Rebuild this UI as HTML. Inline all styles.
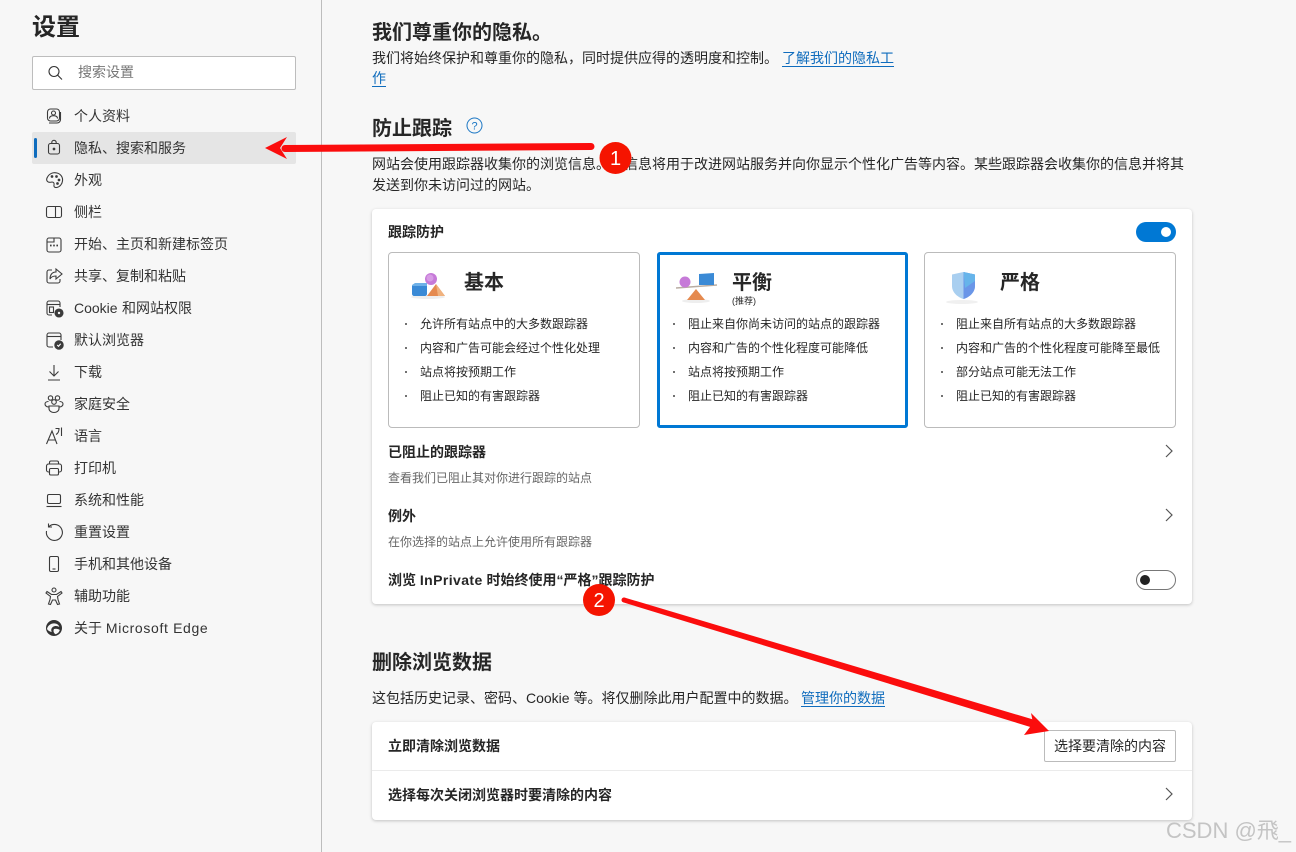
<!DOCTYPE html>
<html lang="zh-CN"><head><meta charset="utf-8"><title>设置</title>
<style>
*{box-sizing:border-box}
html,body{margin:0;padding:0}
body{width:1296px;height:852px;overflow:hidden;background:#f7f7f7;position:relative;font-family:"Liberation Sans","Noto Sans CJK SC",sans-serif;font-size:14px;color:#262626}
.t{position:absolute;white-space:nowrap;line-height:20px}
.b{font-weight:700}
.h{font-size:20px;font-weight:700;line-height:28px;color:#262626}
.s{font-size:12px;line-height:16px}
.g{color:#666}
.box{position:absolute}
.card{background:#fff;border-radius:4px;box-shadow:0 1px 3px rgba(0,0,0,.22)}
.opt{background:#fff;border:1px solid #bbb;border-radius:4px}
a{color:#0f6cbd;text-decoration:none;border-bottom:1px solid #0f6cbd}
.n{position:absolute;left:74px;white-space:nowrap;line-height:20px;color:#333}
svg.i{position:absolute;left:44px;width:20px;height:20px;fill:none;stroke:#3b3b3b;stroke-width:1.1}
svg.c{position:absolute;width:10px;height:16px;fill:none;stroke:#555;stroke-width:1.2}
.d{position:absolute;width:2px;height:2px;background:#444;border-radius:1px}
</style></head><body>

<div class="box" style="left:321px;top:0;width:1px;height:852px;background:#bdbdbd"></div>

<div class="t b" style="left:32px;top:11px;font-size:24px;line-height:34px">设置</div>
<div class="box" style="left:32px;top:56px;width:264px;height:34px;background:#fff;border:1px solid #bdbdbd;border-radius:2px"></div>
<svg class="i" style="left:47px;top:65px;width:17px;height:17px;stroke:#333" viewBox="0 0 17 17"><circle cx="7" cy="6.500" r="5"/><path d="M10.600 10.100 15 14.500"/></svg>
<div class="t g" style="left:78px;top:62px;color:#767676">搜索设置</div>

<div class="box" style="left:32px;top:132px;width:264px;height:32px;background:#e5e5e5;border-radius:2px"></div>
<div class="box" style="left:34px;top:138px;width:3px;height:20px;background:#0f6cbd;border-radius:2px"></div>

<svg class="i" style="top:106px" viewBox="0 0 20 20"><rect x="3.500" y="3" width="12" height="12" rx="3"/><path d="M5 17h8c2 0 3.500-1.500 3.500-3.500V6"/><circle cx="9.500" cy="7" r="2"/><path d="M5.500 12.500c0-2 1.500-2.800 4-2.800s4 .8 4 2.800"/></svg>
<div class="n" style="top:106px">个人资料</div>

<svg class="i" style="top:138px" viewBox="0 0 20 20"><rect x="4.500" y="5.500" width="11" height="10.500" rx="2"/><path d="M7.800 5.500V4.500a2.200 2.200 0 0 1 4.400 0v1"/><circle cx="10" cy="11" r=".8" fill="#3b3b3b"/></svg>
<div class="n" style="top:138px">隐私、搜索和服务</div>

<svg class="i" style="top:170px" viewBox="0 0 20 20"><path d="M3 8C5 3.500 9 2 13 3c4 1 6 4.500 5.500 8-.4 3-2.500 6-6 6.500-2 .2-3-1-2.500-2.500.5-1.800-.5-3-2-3-2 .5-3.500.5-4.500-.5C2.500 10.500 2.500 9.200 3 8Z"/><circle cx="8" cy="6.500" r=".8" fill="#3b3b3b"/><circle cx="12.500" cy="6.500" r=".8" fill="#3b3b3b"/><circle cx="15" cy="10" r=".8" fill="#3b3b3b"/><circle cx="13.500" cy="13.500" r=".8" fill="#3b3b3b"/></svg>
<div class="n" style="top:170px">外观</div>

<svg class="i" style="top:202px" viewBox="0 0 20 20"><rect x="2.500" y="4.500" width="15" height="11" rx="2"/><path d="M11.500 4.500v11"/></svg>
<div class="n" style="top:202px">侧栏</div>

<svg class="i" style="top:234px" viewBox="0 0 20 20"><path d="M5 4h10a2 2 0 0 1 2 2v10a2 2 0 0 1-2 2H5a2 2 0 0 1-2-2V6a2 2 0 0 1 2-2Z"/><path d="M3 8h7V4"/><path d="M6 11.500h1.600M9.200 11.500h1.600M12.400 11.500h1.600" stroke-width="1.800"/></svg>
<div class="n" style="top:234px">开始、主页和新建标签页</div>

<svg class="i" style="top:266px" viewBox="0 0 20 20"><path d="M8 4H5a2 2 0 0 0-2 2v9a2 2 0 0 0 2 2h9a2 2 0 0 0 2-2v-2"/><path d="M12 3l6 5-6 5v-3c-3 0-5 1-6 3 0-4 2-7 6-7Z"/></svg>
<div class="n" style="top:266px">共享、复制和粘贴</div>

<svg class="i" style="top:298px" viewBox="0 0 20 20"><path d="M8 17H5a2 2 0 0 1-2-2V5a2 2 0 0 1 2-2h9a2 2 0 0 1 2 2v4"/><path d="M3 6.500h13"/><rect x="5.500" y="9" width="4" height="5.500"/><circle cx="15" cy="15" r="4" fill="#3b3b3b"/><circle cx="15" cy="15" r="1.200" fill="#f7f7f7" stroke="none"/></svg>
<div class="n" style="top:298px">Cookie<span style="letter-spacing:.5px"> </span>和网站权限</div>

<svg class="i" style="top:330px" viewBox="0 0 20 20"><path d="M9 17H5a2 2 0 0 1-2-2V5a2 2 0 0 1 2-2h10a2 2 0 0 1 2 2v5"/><path d="M3 6.500h14"/><circle cx="15" cy="15" r="4.200" fill="#3b3b3b"/><path d="M13.200 15l1.300 1.300 2.200-2.500" stroke="#fff"/></svg>
<div class="n" style="top:330px">默认浏览器</div>

<svg class="i" style="top:362px" viewBox="0 0 20 20"><path d="M10 3v11M5.500 9.500 10 14l4.500-4.500M4 18h12"/></svg>
<div class="n" style="top:362px">下载</div>

<svg class="i" style="top:394px" viewBox="0 0 20 20"><circle cx="6.500" cy="4" r="2.200"/><circle cx="13.500" cy="4" r="2.200"/><circle cx="10" cy="8" r="2.300"/><path d="M4.500 7.500C2.500 7.500 1 8.500 1 10s1.500 3 3.500 3"/><path d="M15.500 7.500c2 0 3.500 1 3.500 2.500s-1.500 3-3.500 3"/><path d="M5 12h10v2.500c0 2.500-2.500 4-5 4s-5-1.500-5-4Z"/></svg>
<div class="n" style="top:394px">家庭安全</div>

<svg class="i" style="top:426px" viewBox="0 0 20 20"><path d="M2.500 18 8 5l5 13M4.500 14h7"/><path d="M11.500 2.500h3.500c0 3-1 5-3 6M17.500 1.500v8.500"/></svg>
<div class="n" style="top:426px">语言</div>

<svg class="i" style="top:458px" viewBox="0 0 20 20"><path d="M5.500 6V4.500a1.500 1.500 0 0 1 1.500-1.500h6a1.500 1.500 0 0 1 1.500 1.500V6"/><path d="M5.500 14H4.500A2 2 0 0 1 2.500 12V8a2 2 0 0 1 2-2h11a2 2 0 0 1 2 2v4a2 2 0 0 1-2 2h-1"/><rect x="5.500" y="10.500" width="9" height="6.500" rx="1.200"/></svg>
<div class="n" style="top:458px">打印机</div>

<svg class="i" style="top:490px" viewBox="0 0 20 20"><rect x="3.500" y="4.500" width="13" height="9" rx="1.500"/><path d="M2.500 16.500h15"/></svg>
<div class="n" style="top:490px">系统和性能</div>

<svg class="i" style="top:522px" viewBox="0 0 20 20"><path d="M5 4.500A8 8 0 1 1 2.500 9"/><path d="M4.500 1.500v3.500H8"/></svg>
<div class="n" style="top:522px">重置设置</div>

<svg class="i" style="top:554px" viewBox="0 0 20 20"><rect x="5.500" y="2.500" width="9" height="15" rx="1.500"/><path d="M8.500 15h3"/></svg>
<div class="n" style="top:554px">手机和其他设备</div>

<svg class="i" style="top:586px" viewBox="0 0 20 20"><circle cx="10" cy="4" r="2"/><path d="M3 5.500 7.500 8.500h5L17 5.500l1 1.500-4.500 3.500.5 3 1.500 4.500-2 .5L11.500 14h-3L6.500 18.500l-2-.5L6 13.500l.5-3L2 7Z"/></svg>
<div class="n" style="top:586px">辅助功能</div>

<svg class="i" style="top:618px;stroke:none" viewBox="0 0 20 20"><circle cx="10" cy="10" r="8" fill="#333"/><path d="M3 11c1-4 4.500-6 8-5.500 2.300.3 4 1.700 4.300 3.500-1.700-1.200-4.500-1.500-6.500 0-1.600 1.200-2 3.300-1 5-2-.3-3.900-1.400-4.800-3Z" fill="#f7f7f7"/><path d="M10 11c1.700-.6 4.500-.3 5.800 1-.6 2.200-2.300 3.800-4.300 4.200-1.700-1-2.600-3.200-1.500-5.200Z" fill="#f7f7f7"/></svg>
<div class="n" style="top:618px">关于 <span style="letter-spacing:.65px">Microsoft Edge</span></div>

<!-- main -->
<div class="t h" style="left:372px;top:19px">我们尊重你的隐私。</div>
<div class="t" style="left:372px;top:48px;line-height:20px">我们将始终保护和尊重你的隐私，同时提供应得的透明度和控制。</div>
<div class="t" style="left:782px;top:48px"><a>了解我们的隐私工</a></div>
<div class="t" style="left:372px;top:68px"><a>作</a></div>

<div class="t h" style="left:372px;top:115px">防止跟踪</div>
<svg style="position:absolute;left:466px;top:117px" width="17" height="17" viewBox="0 0 17 17"><circle cx="8.500" cy="8.500" r="7.500" fill="none" stroke="#1a76c4" stroke-width="1"/><text x="8.500" y="12.500" text-anchor="middle" font-size="11" fill="#1a76c4" font-family="Liberation Sans">?</text></svg>

<div class="t" style="left:372px;top:154px;width:820px">网站会使用跟踪器收集你的浏览信息。此信息将用于改进网站服务并向你显示个性化广告等内容。某些跟踪器会收集你的信息并将其</div>
<div class="t" style="left:372px;top:175px">发送到你未访问过的网站。</div>

<div class="box card" style="left:372px;top:209px;width:820px;height:395px"></div>
<div class="t b" style="left:388px;top:222px">跟踪防护</div>
<div class="box" style="left:1136px;top:222px;width:40px;height:20px;background:#0078d4;border-radius:10px"></div>
<div class="box" style="left:1161px;top:227px;width:10px;height:10px;background:#fff;border-radius:50%"></div>

<div class="box opt" style="left:388px;top:252px;width:252px;height:176px"></div>
<div class="box opt" style="left:657px;top:252px;width:251px;height:176px;border:3px solid #0078d4;border-radius:3px"></div>
<div class="box opt" style="left:924px;top:252px;width:252px;height:176px"></div>

<!-- basic illustration -->
<svg style="position:absolute;left:408px;top:270px" width="40" height="32" viewBox="0 0 40 32"><ellipse cx="20" cy="27" rx="17" ry="2" fill="#eee"/><polygon points="28,14 37,26 19,26" fill="#e58a4f"/><polygon points="28,14 37,26 30,26" fill="#f0b27e"/><circle cx="23" cy="9" r="6" fill="#c67ad8"/><circle cx="22" cy="8" r="3.500" fill="#d79be5"/><path d="M4 15h15v9c0 1-1 2-2 2H6c-1 0-2-1-2-2Z" fill="#3a8ad6"/><path d="M4 15l3-2h12v3H4Z" fill="#6fb1e8"/></svg>
<div class="t b" style="left:464px;top:269px;font-size:20px;line-height:28px">基本</div>

<svg style="position:absolute;left:676px;top:270px" width="42" height="34" viewBox="0 0 42 34"><ellipse cx="20" cy="31" rx="14" ry="2" fill="#eee"/><polygon points="20,19 29,30 11,30" fill="#e58a4f"/><path d="M0 18 41 15" stroke="#b9ada3" stroke-width="1.500"/><circle cx="9" cy="12" r="5.500" fill="#c67ad8"/><path d="M23 4l15-1 0 12H23Z" fill="#3a8ad6"/></svg>
<div class="t b" style="left:732px;top:269px;font-size:20px;line-height:28px">平衡</div>
<div class="t" style="left:732px;top:294px;font-size:9px;line-height:14px">(推荐)</div>

<svg style="position:absolute;left:945px;top:268px" width="40" height="38" viewBox="0 0 40 38"><ellipse cx="17" cy="34" rx="16" ry="2" fill="#f0f0f0"/><path d="M7 6.500 18.500 4 30 6.500V18c0 6-5 11-11.500 13C12 29 7 24 7 18Z" fill="#a9cff0"/><path d="M18.500 4 30 6.500V18c0 6-5 11-11.500 13Z" fill="#6a96e8"/><path d="M18.500 4 30 6.500V13L20 20Z" fill="#66b4ea"/></svg>
<div class="t b" style="left:1000px;top:269px;font-size:20px;line-height:28px">严格</div>

<div class="d" style="left:405px;top:323px"></div><div class="t s" style="left:420px;top:316px">允许所有站点中的大多数跟踪器</div>
<div class="d" style="left:405px;top:347px"></div><div class="t s" style="left:420px;top:340px">内容和广告可能会经过个性化处理</div>
<div class="d" style="left:405px;top:371px"></div><div class="t s" style="left:420px;top:364px">站点将按预期工作</div>
<div class="d" style="left:405px;top:395px"></div><div class="t s" style="left:420px;top:388px">阻止已知的有害跟踪器</div>

<div class="d" style="left:673px;top:323px"></div><div class="t s" style="left:688px;top:316px">阻止来自你尚未访问的站点的跟踪器</div>
<div class="d" style="left:673px;top:347px"></div><div class="t s" style="left:688px;top:340px">内容和广告的个性化程度可能降低</div>
<div class="d" style="left:673px;top:371px"></div><div class="t s" style="left:688px;top:364px">站点将按预期工作</div>
<div class="d" style="left:673px;top:395px"></div><div class="t s" style="left:688px;top:388px">阻止已知的有害跟踪器</div>

<div class="d" style="left:941px;top:323px"></div><div class="t s" style="left:956px;top:316px">阻止来自所有站点的大多数跟踪器</div>
<div class="d" style="left:941px;top:347px"></div><div class="t s" style="left:956px;top:340px">内容和广告的个性化程度可能降至最低</div>
<div class="d" style="left:941px;top:371px"></div><div class="t s" style="left:956px;top:364px">部分站点可能无法工作</div>
<div class="d" style="left:941px;top:395px"></div><div class="t s" style="left:956px;top:388px">阻止已知的有害跟踪器</div>

<div class="t b" style="left:388px;top:442px">已阻止的跟踪器</div>
<div class="t s g" style="left:388px;top:470px">查看我们已阻止其对你进行跟踪的站点</div>
<svg class="c" style="left:1164px;top:443px" viewBox="0 0 10 16"><path d="M2 2l6 6-6 6"/></svg>

<div class="t b" style="left:388px;top:506px">例外</div>
<div class="t s g" style="left:388px;top:534px">在你选择的站点上允许使用所有跟踪器</div>
<svg class="c" style="left:1164px;top:507px" viewBox="0 0 10 16"><path d="M2 2l6 6-6 6"/></svg>

<div class="t b" style="left:388px;top:570px">浏览 <span style="letter-spacing:.4px">InPrivate</span> 时始终使用“严格”跟踪防护</div>
<div class="box" style="left:1136px;top:570px;width:40px;height:20px;background:#fff;border:1px solid #777;border-radius:10px"></div>
<div class="box" style="left:1140px;top:575px;width:10px;height:10px;background:#222;border-radius:50%"></div>

<div class="t h" style="left:372px;top:649px">删除浏览数据</div>
<div class="t" style="left:372px;top:688px">这包括历史记录、密码、Cookie 等。将仅删除此用户配置中的数据。</div>
<div class="t" style="left:801px;top:688px"><a>管理你的数据</a></div>

<div class="box card" style="left:372px;top:722px;width:820px;height:98px"></div>
<div class="box" style="left:372px;top:770px;width:820px;height:1px;background:#ebebeb"></div>
<div class="t b" style="left:388px;top:736px">立即清除浏览数据</div>
<div class="box" style="left:1044px;top:730px;width:132px;height:32px;background:#fff;border:1px solid #bbb;border-radius:2px"></div>
<div class="t" style="left:1044px;top:736px;width:132px;text-align:center">选择要清除的内容</div>
<div class="t b" style="left:388px;top:785px">选择每次关闭浏览器时要清除的内容</div>
<svg class="c" style="left:1164px;top:786px" viewBox="0 0 10 16"><path d="M2 2l6 6-6 6"/></svg>

<!-- annotations -->
<svg style="position:absolute;left:0;top:0" width="1296" height="852" viewBox="0 0 1296 852">
<path d="M591 146.500 285 148.500" stroke="#fb0d0d" stroke-width="7" stroke-linecap="round" fill="none"/>
<polygon points="265,148 287,137 280,148 287,159" fill="#fb0d0d"/>
<circle cx="615.500" cy="158" r="16" fill="#f51400"/>
<text x="615.500" y="165" text-anchor="middle" font-size="20" fill="#fff" font-family="Liberation Sans">1</text>
<circle cx="624" cy="600" r="2.500" fill="#fb0d0d"/>
<polygon points="624.700,597.600 1034,719.800 1032,727.500 623.300,602.400" fill="#fb0d0d"/>
<polygon points="1049,731 1024,735 1033,723 1031,713" fill="#fb0d0d"/>
<circle cx="599" cy="600" r="16" fill="#f51400"/>
<text x="599" y="607" text-anchor="middle" font-size="20" fill="#fff" font-family="Liberation Sans">2</text>
</svg>

<div class="t" style="left:1166px;top:818px;font-size:22px;line-height:26px;color:#c4c4c4">CSDN @飛_</div>
</body></html>
